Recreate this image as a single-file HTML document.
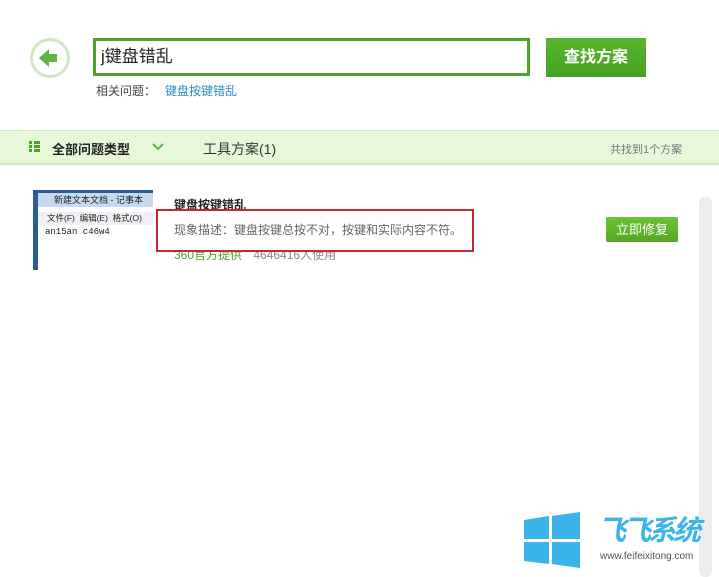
<!DOCTYPE html><html><head><meta charset="utf-8"><style>
body{margin:0;width:719px;height:569px;background:#fff;position:relative;overflow:hidden;font-family:"Liberation Sans","Noto Sans CJK SC",sans-serif}
.a{position:absolute}
</style></head><body>
<div class="a" style="left:30px;top:38px;width:34px;height:34px;border:3px solid #cfe8c4;border-radius:50%;background:#fff"></div>
<svg class="a" style="left:36px;top:46px" width="28" height="24"><path d="M3 12 L13 3 V8 H21 V16 H13 V21 Z" fill="#5fb648"/></svg>
<div class="a" style="left:93px;top:38px;width:437px;height:38px;border:3px solid #4ca22a;background:#fff;font-size:17px;line-height:32px;padding-left:5px;box-sizing:border-box;color:#222">j键盘错乱</div>
<div class="a" style="left:546px;top:38px;width:100px;height:39px;background:linear-gradient(#58b52d,#45a321);color:#fff;font-size:16px;font-weight:bold;text-align:center;line-height:39px">查找方案</div>
<div class="a" style="left:96px;top:82px;font-size:12px;color:#444">相关问题：</div>
<div class="a" style="left:165px;top:82px;font-size:12px;color:#2f8ac6">键盘按键错乱</div>
<div class="a" style="left:0;top:130px;width:719px;height:32px;background:#e6f8d8;border-top:1px solid #d4ecc4;border-bottom:2px solid #d6e2cc"></div>
<svg class="a" style="left:29px;top:141px" width="12" height="11"><g fill="#4ca22a"><rect x="0" y="0" width="3" height="3"/><rect x="0" y="4" width="3" height="3"/><rect x="0" y="8" width="3" height="3"/><rect x="5" y="0" width="6" height="3"/><rect x="5" y="4" width="6" height="3"/><rect x="5" y="8" width="6" height="3"/></g></svg>
<div class="a" style="left:52px;top:139px;font-size:13px;font-weight:bold;color:#222">全部问题类型</div>
<svg class="a" style="left:152px;top:142px" width="12" height="10"><path d="M1 2 L6 7 L11 2" stroke="#5fb648" stroke-width="2" fill="none"/></svg>
<div class="a" style="left:203px;top:139px;font-size:14px;color:#333">工具方案(1)</div>
<div class="a" style="left:610px;top:141px;font-size:11px;color:#777">共找到1个方案</div>
<div class="a" style="left:33px;top:190px;width:120px;height:80px;background:#2a5d94;overflow:hidden">
<div class="a" style="left:5px;top:3px;width:115px;height:14px;background:#c6d9ee;font-size:9px;line-height:14px;padding-left:16px;box-sizing:border-box;color:#222">新建文本文档 - 记事本</div>
<div class="a" style="left:5px;top:17px;width:115px;height:63px;background:#fff;"></div>
<div class="a" style="left:5px;top:22px;width:115px;height:13px;background:#eef0f4;font-size:8.5px;line-height:13px;color:#222;padding-left:9px;box-sizing:border-box;white-space:nowrap">文件(F)&nbsp; 编辑(E)&nbsp; 格式(O)</div>
<div class="a" style="left:12px;top:37px;font-size:9px;font-family:'Liberation Mono',monospace;color:#222">an15an c46w4</div>
</div>
<div class="a" style="left:174px;top:196px;font-size:12px;font-weight:bold;color:#222">键盘按键错乱</div>
<div class="a" style="left:174px;top:246px;font-size:12px;color:#4ca22a">360官方提供 <span style="color:#888;margin-left:8px">4646416人使用</span></div>
<div class="a" style="left:156px;top:209px;width:318px;height:43px;box-sizing:border-box;border:2px solid #c0292d;background:#fff;font-size:12px;color:#666;line-height:39px;padding-left:16px;white-space:nowrap">现象描述：键盘按键总按不对，按键和实际内容不符。</div>
<div class="a" style="left:606px;top:217px;width:72px;height:25px;background:linear-gradient(#6dc333,#55a923);border-radius:2px;color:#fff;font-size:13px;text-align:center;line-height:25px">立即修复</div>
<div class="a" style="left:699px;top:197px;width:13px;height:380px;background:#ececec;border-radius:6px"></div>
<svg class="a" style="left:522px;top:512px" width="60" height="56"><path d="M2 8 L27 4 V27 H2Z M30 4 L58 0 V27 H30Z M2 30 H27 V52 L2 49Z M30 30 H58 V56 L30 52Z" fill="#3ab4ea"/></svg>
<div class="a" style="left:598px;top:516px;font-size:28px;line-height:30px;font-weight:bold;font-style:italic;color:#3ab4ea;letter-spacing:-3px;white-space:nowrap">飞飞系统</div>
<div class="a" style="left:600px;top:551px;font-size:10px;color:#555">www.feifeixitong.com</div>
</body></html>
